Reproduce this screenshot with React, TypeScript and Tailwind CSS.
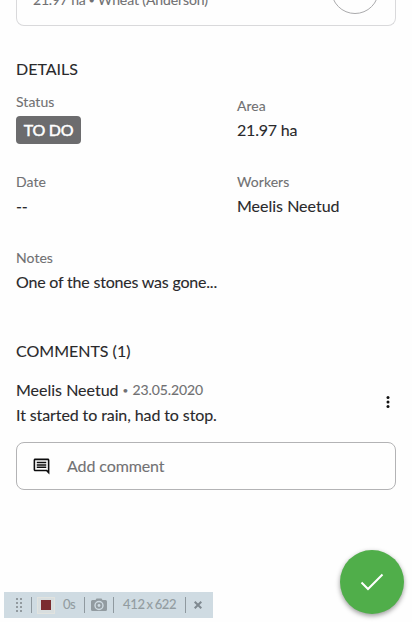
import React from "react";

function Field({ label, value, tight }: { label: string; value: string; tight?: boolean }) {
  return (
    <div className="h-[76px] pt-1">
      <div className="text-sm leading-5 tracking-[0.05px] text-[#707072]">{label}</div>
      <div className={tight ? "mt-0.5 leading-6 tracking-[-0.2px]" : "mt-0.5 leading-6"}>{value}</div>
    </div>
  );
}

function TaskCard() {
  return (
    <section className="flex h-[26px] shrink-0 items-end justify-between rounded-b-lg border border-t-0 border-[#d9d9db] pr-4 pl-4">
      <p className="mb-[15px] flex items-center text-sm leading-5 tracking-[-0.1px] whitespace-nowrap text-[#707072]">
        <span className="tracking-[-0.2px]">21.97 ha</span>
        <span className="mx-[3px] text-[11px]">•</span>
        <span>Wheat (Anderson)</span>
      </p>
      <div className="mb-[11px] h-12 w-12 shrink-0 rounded-full border border-[#aaaaac]" />
    </section>
  );
}

function CommentIcon() {
  return (
    <svg className="h-[19px] w-[19px]" viewBox="0 0 24 24" fill="currentColor">
      <path d="M21.99 4c0-1.1-.89-2-1.99-2H4c-1.1 0-2 .9-2 2v12c0 1.1.9 2 2 2h14l4 4-.01-18zM20 4v13.17L18.83 16H4V4h16zM6 12h12v2H6zm0-3h12v2H6zm0-3h12v2H6z" />
    </svg>
  );
}

function RecorderBar() {
  return (
    <div className="absolute top-[592px] left-1 flex h-[26px] w-[209px] items-center bg-[#cfdbe2] text-[13px] text-[#929ba0]">
      <svg className="ml-3 h-[14px] w-[6px] shrink-0" viewBox="0 0 6 14" fill="#929a9f">
        {[0, 4, 8, 12].map((y) => (
          <g key={y}>
            <rect x="0" y={y} width="2" height="2" />
            <rect x="4" y={y} width="2" height="2" />
          </g>
        ))}
      </svg>
      <span className="ml-[9px] h-4 w-px shrink-0 bg-[#8f999f]" />
      <span className="ml-[5px] flex h-[17px] w-[18px] shrink-0 items-center justify-center border border-[#e1e3df] bg-[#d8dedf]">
        <span className="h-[10px] w-[10px] bg-[#7b2c2f]" />
      </span>
      <span className="ml-2 w-[14px] shrink-0 tracking-[-0.5px] whitespace-nowrap">0s</span>
      <span className="ml-[7px] h-4 w-px shrink-0 bg-[#8f999f]" />
      <svg className="ml-1.5 h-[14px] w-4 shrink-0" viewBox="0 0 16 14">
        <path fill="#929ba0" d="M1.5 2h3l1-1.5h5l1 1.5h3Q16 2 16 3.5v8q0 1.5-1.5 1.5h-13Q0 13 0 11.5v-8Q0 2 1.5 2z" />
        <circle cx="8" cy="7.5" r="4" fill="none" stroke="#cfdbe2" strokeWidth="1.4" />
        <circle cx="8" cy="7.5" r="1.4" fill="#cfdbe2" />
      </svg>
      <span className="ml-1.5 h-4 w-px shrink-0 bg-[#8f999f]" />
      <span className="ml-[9px] w-[53px] shrink-0 tracking-[-0.35px] [word-spacing:-1px] whitespace-nowrap">412 x 622</span>
      <span className="ml-[9px] h-4 w-px shrink-0 bg-[#8f999f]" />
      <svg className="ml-2 h-2 w-2 shrink-0" viewBox="0 0 8 8" stroke="#7f8990" strokeWidth="2">
        <path d="M.7.7 7.3 7.3M7.3.7.7 7.3" />
      </svg>
    </div>
  );
}

export default function App() {
  return (
    <main className="relative flex h-[622px] w-[412px] flex-col overflow-hidden bg-[#fefefe] px-4 font-['Lato',sans-serif] text-base text-[#29292b] [-webkit-text-stroke:0.1px]">
      <TaskCard />
      <h2 className="mt-[31px] leading-6">DETAILS</h2>
      <div className="mt-[11px] grid grid-cols-[221px_1fr]">
        <div>
          <div className="text-sm leading-5 tracking-[0.05px] text-[#707072]">Status</div>
          <span className="mt-1 flex h-7 w-[65px] items-center justify-center rounded bg-[#6c6c6e] tracking-[-0.3px] whitespace-nowrap text-white [-webkit-text-stroke:0.5px]">
            TO DO
          </span>
        </div>
        <Field label="Area" value="21.97 ha" tight />
        <Field label="Date" value="--" tight />
        <Field label="Workers" value="Meelis Neetud" />
        <div className="col-span-2">
          <Field label="Notes" value="One of the stones was gone..." tight />
        </div>
      </div>
      <h2 className="mt-[19px] leading-6">COMMENTS (1)</h2>
      <div className="mt-[15px] flex items-center justify-between">
        <div>
          <div className="flex h-6 items-center leading-6">
            <span>Meelis Neetud</span>
            <span className="ml-1 text-[10px] text-[#707072]">•</span>
            <span className="ml-1 text-sm leading-6 tracking-[-0.1px] text-[#707072]">23.05.2020</span>
          </div>
          <p className="mt-px leading-6 tracking-[-0.1px]">It started to rain, had to stop.</p>
        </div>
        <svg className="mr-1.5 mb-0.5 h-3 w-1" viewBox="0 0 4 12" fill="#111">
          <circle cx="2" cy="1.6" r="1.5" />
          <circle cx="2" cy="6" r="1.5" />
          <circle cx="2" cy="10.4" r="1.5" />
        </svg>
      </div>
      <div className="mt-[15px] flex h-12 items-center rounded-lg border border-[#b3b3b5] pl-[15px]">
        <span className="text-[#0c0c0d]">
          <CommentIcon />
        </span>
        <span className="ml-4 tracking-[-0.1px] text-[#727274]">Add comment</span>
      </div>
      <RecorderBar />
      <button className="absolute top-[550px] left-[340px] flex h-16 w-16 items-center justify-center rounded-full bg-[#50ae4a] shadow-[0_2px_5px_rgba(0,0,0,0.4)]">
        <svg className="h-[18px] w-6" viewBox="0 0 24 18" fill="none" stroke="white" strokeWidth="2">
          <path d="m1.5 9.5 6.5 6.5L22.5 1.5" />
        </svg>
      </button>
    </main>
  );
}
